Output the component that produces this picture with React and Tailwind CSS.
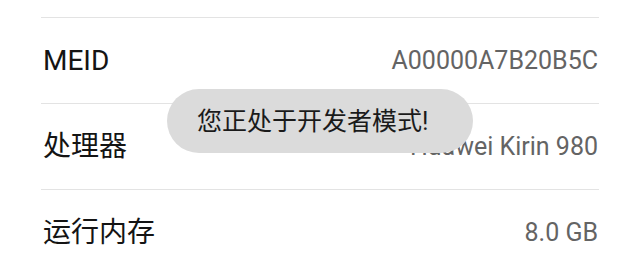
import React from "react";

const rows = [
  { label: "MEID", value: "A00000A7B20B5C" },
  { label: "处理器", value: "Huawei Kirin 980" },
  { label: "运行内存", value: "8.0 GB" },
];

export default function App() {
  return (
    <div
      className="relative w-[640px] h-[275px] overflow-hidden bg-white"
      style={{ fontFamily: 'Roboto, "Noto Sans CJK SC", sans-serif' }}
    >
      <div className="pt-[17px] px-[41px]">
        {rows.map((r) => (
          <div key={r.label} className="border-t border-[#e3e3e3] h-[86px] flex items-center justify-between pl-[2px] pr-[1px]">
            <span className="text-[28px] text-[#141414] leading-none">{r.label}</span>
            <span className="text-[25px] text-[#646464] leading-none">{r.value}</span>
          </div>
        ))}
      </div>
      <div className="absolute left-[167px] top-[89px] w-[306px] h-[64px] rounded-full bg-[#dbdbdb] flex items-center pl-[30px]">
        <span className="text-[25px] text-[#1a1a1a] leading-none">您正处于开发者模式!</span>
      </div>
    </div>
  );
}
